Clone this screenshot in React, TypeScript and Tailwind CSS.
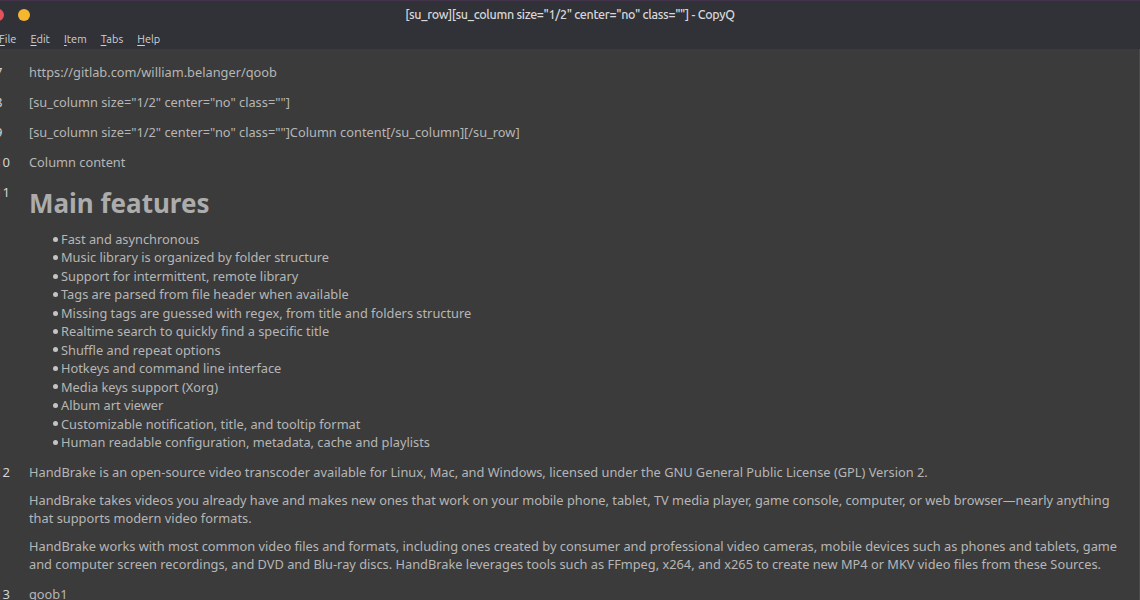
import type { ReactNode } from 'react';

const features = [
  'Fast and asynchronous',
  'Music library is organized by folder structure',
  'Support for intermittent, remote library',
  'Tags are parsed from file header when available',
  'Missing tags are guessed with regex, from title and folders structure',
  'Realtime search to quickly find a specific title',
  'Shuffle and repeat options',
  'Hotkeys and command line interface',
  'Media keys support (Xorg)',
  'Album art viewer',
  'Customizable notification, title, and tooltip format',
  'Human readable configuration, metadata, cache and playlists',
];

function Row({ n, children }: { n: number; children: ReactNode }) {
  return (
    <div className="flex py-[6px]">
      <div className="w-[34px] -ml-[5px] shrink-0 text-[13px] text-[#d4d4d4] leading-[18px]">{n}</div>
      <div className="flex-1 min-w-0">{children}</div>
    </div>
  );
}

function Menu({ label }: { label: string }) {
  return (
    <span>
      <span className="underline underline-offset-2">{label[0]}</span>
      {label.slice(1)}
    </span>
  );
}

export default function App() {
  return (
    <div className="w-[1140px] h-[600px] overflow-hidden flex flex-col bg-[#3b3b3b] font-['Noto_Sans',sans-serif]">
      {/* title bar */}
      <div className="h-[28px] shrink-0 bg-[#313238] border-t border-[#43334a] relative flex items-center justify-center">
        <div className="absolute left-[-8px] top-[8px] w-[12px] h-[12px] rounded-full bg-[#e5525c]" />
        <div className="absolute left-[18px] top-[8px] w-[12px] h-[12px] rounded-full bg-[#f4b72f]" />
        <span className="text-[#d8d8d8] text-[12.5px] font-medium tracking-[-0.3px] font-['Ubuntu','Noto_Sans',sans-serif]">
          [su_row][su_column size="1/2" center="no" class=""] - CopyQ
        </span>
      </div>

      {/* menu bar */}
      <div className="h-[21px] shrink-0 bg-[#313238] flex items-center gap-[14px] -ml-[1px] pt-[2px] text-[11px] text-[#d0d0d0] leading-none font-['Ubuntu','Noto_Sans',sans-serif]">
        <Menu label="File" />
        <Menu label="Edit" />
        <Menu label="Item" />
        <Menu label="Tabs" />
        <Menu label="Help" />
      </div>

      {/* item list */}
      <div className="flex-1 overflow-hidden border-r border-[#4a4a4a]">
        <div className="-mt-[22px] pr-[11px] text-[12.8px] leading-[18px] text-[#b6b6b6]">
          <Row n={6}>[su_row][su_column size="1/2" center="no" class=""]</Row>
          <Row n={7}>https://gitlab.com/william.belanger/qoob</Row>
          <Row n={8}>[su_column size="1/2" center="no" class=""]</Row>
          <Row n={9}>[su_column size="1/2" center="no" class=""]Column content[/su_column][/su_row]</Row>
          <Row n={10}>Column content</Row>
          <Row n={11}>
            <h1 className="mt-[2px] text-[26px] font-bold leading-[36px] text-[#acacac]">Main features</h1>
            <ul className="mt-[9px] pl-[24px] leading-[18.45px]">
              {features.map((f) => (
                <li key={f} className="flex items-center">
                  <span className="w-[5px] h-[5px] rounded-full bg-[#c4c4c4] mr-[3px] shrink-0" />
                  {f}
                </li>
              ))}
            </ul>
          </Row>
          <Row n={12}>
            <p>
              HandBrake is an open-source video transcoder available for Linux, Mac, and Windows, licensed under the GNU General Public License (GPL) Version 2.
            </p>
            <p className="mt-[10px]">
              HandBrake takes videos you already have and makes new ones that work on your mobile phone, tablet, TV media player, game console, computer, or web browser—nearly anything that supports modern video formats.
            </p>
            <p className="mt-[10px]">
              HandBrake works with most common video files and formats, including ones created by consumer and professional video cameras, mobile devices such as phones and tablets, game and computer screen recordings, and DVD and Blu-ray discs. HandBrake leverages tools such as FFmpeg, x264, and x265 to create new MP4 or MKV video files from these Sources.
            </p>
          </Row>
          <Row n={13}>qoob1</Row>
        </div>
      </div>
    </div>
  );
}
